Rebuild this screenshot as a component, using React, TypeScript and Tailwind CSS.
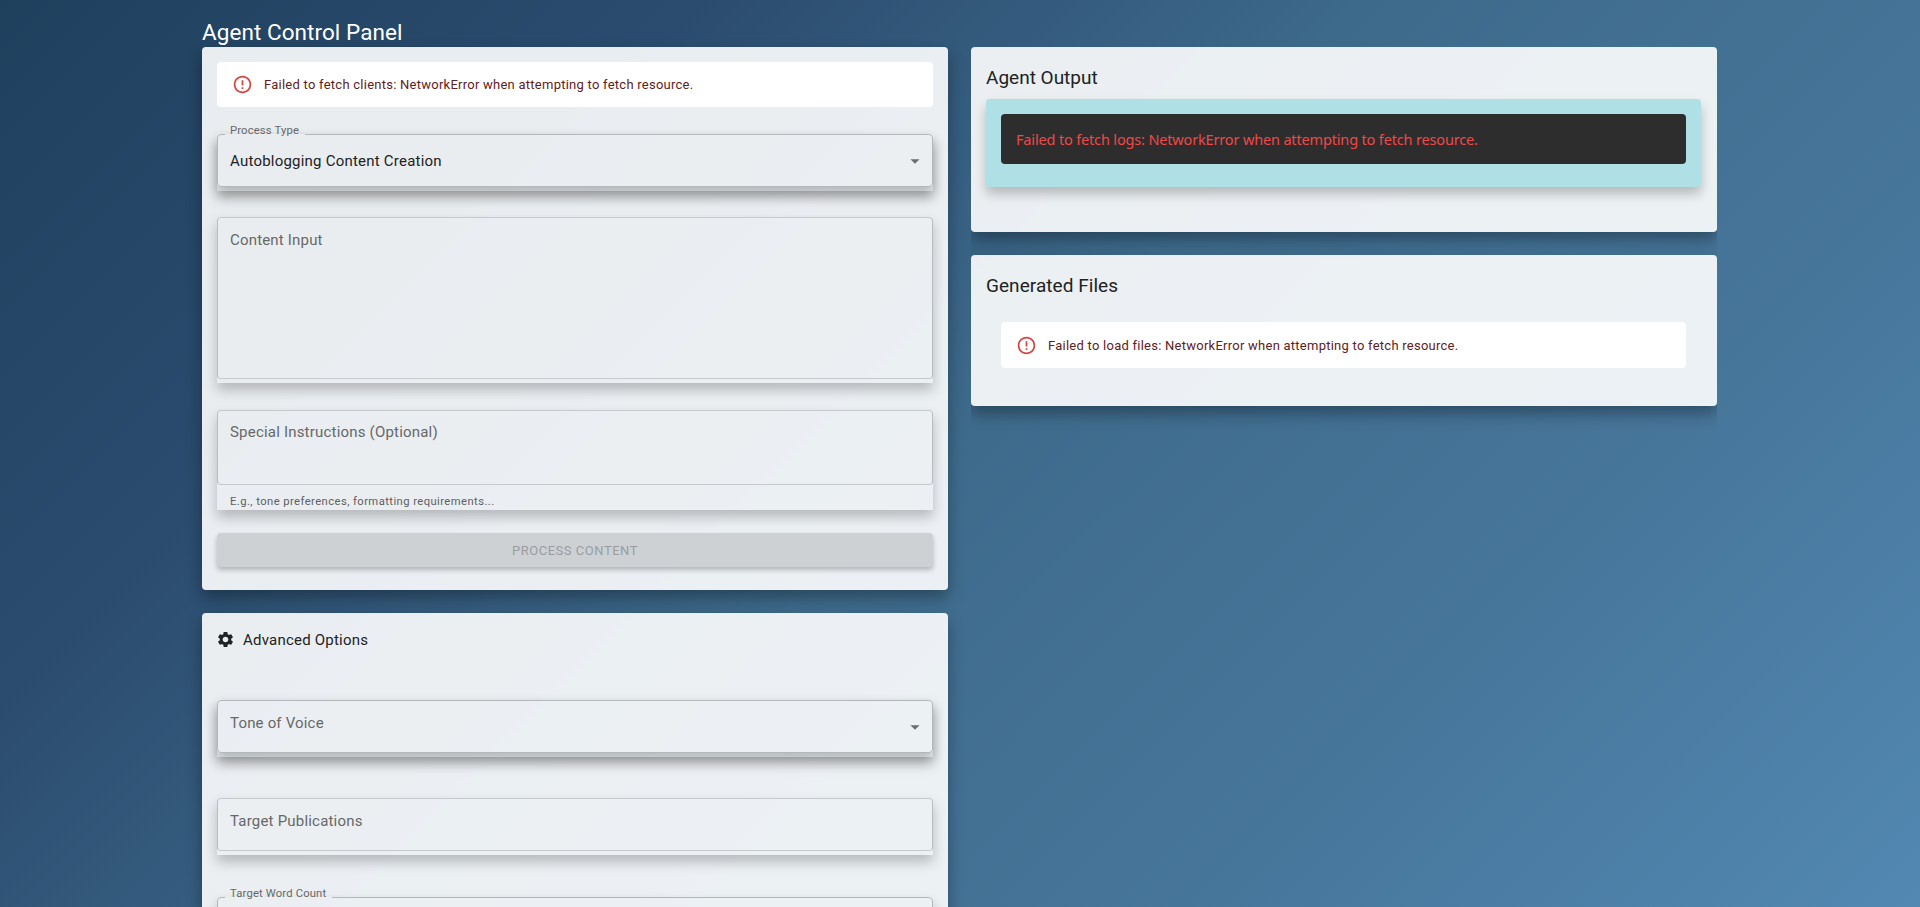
import React from "react";
import { MdErrorOutline, MdSettings, MdArrowDropDown } from "react-icons/md";

const softShadow = "shadow-[0_7px_12px_rgba(0,0,0,0.23)]";
const card = "rounded-[4px] bg-white/90 shadow-[0_8px_16px_rgba(0,0,0,0.33)]";

function Alert({ children }: { children: React.ReactNode }) {
  return (
    <div className="flex h-[45px] items-center rounded-[4px] bg-white pl-[15px] text-[#5f2120]">
      <MdErrorOutline className="size-[21px] text-[#d74444]" />
      <span className="ml-[11px] text-[13px] leading-5 tracking-[0.25px] whitespace-nowrap">{children}</span>
    </div>
  );
}

function Outline({ legend, faint }: { legend?: string; faint?: boolean }) {
  if (legend) {
    return (
      <fieldset className="pointer-events-none absolute inset-x-0 -top-[6px] bottom-0 rounded-[4px] border border-[#b3b8bb] px-[7px]">
        <legend className="h-3 pr-[6px] pl-[5px] text-[11.25px] leading-3 tracking-[0.16px] whitespace-nowrap text-[#666869]">
          <span className="relative -top-[3px]">{legend}</span>
        </legend>
      </fieldset>
    );
  }
  return (
    <div
      className={
        faint
          ? "pointer-events-none absolute inset-0 rounded-[4px] border border-x-[#b9bdc0] border-y-[#c6cacd]"
          : "pointer-events-none absolute inset-0 rounded-[4px] border border-[#b3b8bb]"
      }
    />
  );
}

function SelectField({ label, value }: { label: string; value?: string }) {
  return (
    <div className={`h-[57px] ${softShadow}`}>
      <div className={`relative flex h-[53px] items-center rounded-[4px] pr-[7px] pl-[13px] text-[15px] ${softShadow}`}>
        <Outline legend={value ? label : undefined} />
        {value ? (
          <span className="relative top-px flex-1 tracking-[0.22px] text-[#212223]">{value}</span>
        ) : (
          <span className="relative -top-[3px] flex-1 tracking-[0.18px] text-[#666869]">{label}</span>
        )}
        <MdArrowDropDown className="size-[22px] text-[#6b6d6f]" />
      </div>
    </div>
  );
}

export default function App() {
  return (
    <div className="h-[907px] overflow-hidden bg-[linear-gradient(135deg,#1f405d_0%,#2b4c6f_25%,#3e6b8c_50%,#47769b_75%,#5288b2_100%)] font-[Roboto,sans-serif]">
      <div className="ml-[202px] grid w-[1515px] grid-cols-[746px_746px] items-start gap-x-[23px]">
        <div>
          <h1 className="h-[47px] pt-4 text-[22.5px] leading-8 tracking-[0.06px] text-white">Agent Control Panel</h1>
          <section className={`flex h-[543px] flex-col p-[15px] ${card}`}>
            <Alert>Failed to fetch clients: NetworkError when attempting to fetch resource.</Alert>
            <div className="mt-[27px]">
              <SelectField label="Process Type" value="Autoblogging Content Creation" />
            </div>
            <div className={`mt-[26px] h-[166px] shrink-0 ${softShadow}`}>
              <div className="relative h-[162px] pt-[12px] pl-[13px] text-[15px] leading-[22px] tracking-[0.18px] text-[#666869]">
                <Outline faint />
                Content Input
              </div>
            </div>
            <div className={`mt-[27px] h-[100px] shrink-0 ${softShadow}`}>
              <div className="relative h-[75px] pt-[11px] pl-[13px] text-[15px] leading-[22px] tracking-[0.2px] text-[#666869]">
                <Outline faint />
                Special Instructions (Optional)
              </div>
              <p className="pt-[7px] pl-[13px] text-[11.25px] leading-[19px] tracking-[0.42px] text-[#5e6062]">
                E.g., tone preferences, formatting requirements...
              </p>
            </div>
            <button
              className="mt-[23px] h-[34px] shrink-0 rounded-[4px] bg-[#cdd1d4] pt-[2px] text-[13px] tracking-[0.52px] text-[#9a9da0] shadow-[0_3px_5px_rgba(0,0,0,0.24)]"
              disabled
            >
              PROCESS CONTENT
            </button>
          </section>
          <section className={`mt-[23px] h-[400px] p-[15px] ${card}`}>
            <h2 className="flex h-[24px] items-center text-[15px] tracking-[0.22px] text-[#212223]">
              <MdSettings className="relative -top-px mr-[8px] -ml-px size-[19px]" />
              Advanced Options
            </h2>
            <div className="mt-12">
              <SelectField label="Tone of Voice" />
            </div>
            <div className={`mt-[41px] h-[57px] ${softShadow}`}>
              <div className="relative h-[53px] pt-[12px] pl-[13px] text-[15px] leading-[22px] tracking-[0.2px] text-[#666869]">
                <Outline faint />
                Target Publications
              </div>
            </div>
            <div className="mt-[42px]">
              <div className={`h-[57px] ${softShadow}`}>
                <div className="relative h-[53px]">
                  <Outline legend="Target Word Count" />
                </div>
              </div>
            </div>
          </section>
        </div>
        <div className="mt-[47px] overflow-hidden pb-10">
          <section className={`h-[185px] pt-[15px] pr-4 pl-[15px] ${card}`}>
            <h2 className="h-[37px] text-[19px] leading-[32px] text-[#212223]">Agent Output</h2>
            <div className={`h-[88px] rounded-[4px] bg-[#afe0e6] p-[15px] ${softShadow}`}>
              <div className="flex h-[50px] items-center rounded-[4px] bg-[#2d2d2d] pt-[2px] pl-[15px] font-['Noto_Sans',sans-serif] text-[14.5px] tracking-[-0.16px] text-[#f04848]">
                Failed to fetch logs: NetworkError when attempting to fetch resource.
              </div>
            </div>
          </section>
          <section className={`mt-[23px] h-[151px] pt-[15px] pr-4 pl-[15px] ${card}`}>
            <h2 className="h-[52px] text-[19px] leading-[32px] tracking-[0.05px] text-[#212223]">Generated Files</h2>
            <div className="px-[15px] *:h-[46px] *:pt-px">
              <Alert>Failed to load files: NetworkError when attempting to fetch resource.</Alert>
            </div>
          </section>
        </div>
      </div>
    </div>
  );
}
